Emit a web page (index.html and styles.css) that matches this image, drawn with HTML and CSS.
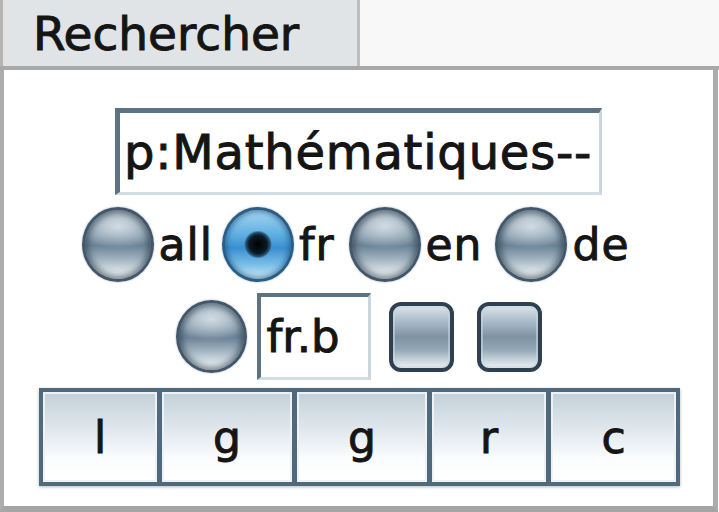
FILE: index.html
```html
<!DOCTYPE html>
<html lang="fr">
<head>
<meta charset="utf-8">
<title>Rechercher</title>
<link rel="stylesheet" href="styles.css">
</head>
<body>
<div class="tabbar">
  <div class="tab">Rechercher</div>
  <div class="tabrest"></div>
</div>
<div class="panel">
  <div class="search">p:Mathématiques--</div>
  <div class="langs">
    <span class="radio"></span><span class="lbl lbl-all">all</span>
    <span class="radio on"></span><span class="lbl lbl-fr">fr</span>
    <span class="radio"></span><span class="lbl lbl-en">en</span>
    <span class="radio"></span><span class="lbl">de</span>
  </div>
  <div class="row2">
    <span class="radio small"></span>
    <div class="mini">fr.b</div>
    <span class="check"></span>
    <span class="check"></span>
  </div>
  <div class="btnbar">
    <div class="btn w1">l</div>
    <div class="btn w2">g</div>
    <div class="btn w2">g</div>
    <div class="btn w1">r</div>
    <div class="btn w3">c</div>
  </div>
</div>
</body>
</html>
```
FILE: styles.css
```css
html, body {
  margin: 0;
  padding: 0;
  background: #ffffff;
}
body {
  width: 719px;
  height: 512px;
  overflow: hidden;
  font-family: "DejaVu Sans", Verdana, sans-serif;
  color: #151515;
  -webkit-text-stroke: 1px #151515;
}
.tabbar {
  display: flex;
  height: 66px;
  border-bottom: 4px solid #a9a9a9;
}
.tab {
  width: 360px;
  box-sizing: border-box;
  background: #e1e4e7;
  border-left: 3px solid #b5b5b5;
  border-right: 3px solid #bdbdbd;
  font-size: 47px;
  line-height: 68px;
  padding-left: 30px;
}
.tabrest {
  flex: 1;
  background: #f8f8f8;
}
.panel {
  width: 718px;
  height: 442px;
  box-sizing: border-box;
  border-left: 4px solid #acacac;
  border-right: 5px solid #acacac;
  border-bottom: 6px solid #a5a5a5;
  display: flex;
  flex-direction: column;
  align-items: center;
  padding-top: 38px;
}
.search {
  width: 487px;
  height: 87px;
  box-sizing: border-box;
  border-top: 5px solid #5d7383;
  border-left: 5px solid #5d7383;
  border-right: 3px solid #c9d6dd;
  border-bottom: 3px solid #d3dee4;
  font-size: 48px;
  letter-spacing: 0.8px;
  line-height: 78px;
  padding-left: 4px;
  white-space: nowrap;
  overflow: hidden;
}
.langs {
  margin-top: 12px;
  height: 75px;
  display: flex;
  align-items: center;
  margin-left: 3px;
}
.lbl {
  font-size: 44px;
  letter-spacing: 1px;
  margin-left: 5px;
  margin-right: 9px;
}
.lbl-fr { margin-right: 14px; }
.lbl-en { margin-right: 13px; }
.radio {
  display: inline-block;
  width: 72px;
  height: 75px;
  box-sizing: border-box;
  border-radius: 50%;
  border: 3px solid #43576a;
  background:
    radial-gradient(ellipse 60% 32% at 50% 24%, rgba(225,233,239,0.8), rgba(225,233,239,0) 100%),
    linear-gradient(#a9b9c4 0%, #8399a9 35%, #6c8497 52%, #a3b5c2 72%, #e6edf1 92%, #f6f8f9 100%);
  box-shadow: inset 0 0 6px 3px rgba(35,55,70,0.6), 0 0 2px rgba(60,80,95,0.5);
}
.radio.on {
  border-color: #2b5e86;
  background:
    radial-gradient(circle at 50% 50%, #000 0, #0b1a26 9px, #24506f 12px, rgba(36,80,111,0) 14px),
    linear-gradient(#a8d6f2 0%, #5fb0e2 35%, #3a8fd0 55%, #7cc0ea 80%, #d2ecfa 100%);
  box-shadow: inset 0 0 5px 2px rgba(20,70,110,0.55), 0 0 2px rgba(40,90,130,0.5);
}
.radio.small {
  width: 71px;
  height: 73px;
}
.row2 {
  margin-top: 11px;
  height: 87px;
  display: flex;
  align-items: center;
}
.mini {
  margin-left: 10px;
  width: 114px;
  height: 87px;
  box-sizing: border-box;
  border-top: 4px solid #5d7383;
  border-left: 4px solid #5d7383;
  border-right: 3px solid #c9d6dd;
  border-bottom: 3px solid #d3dee4;
  font-size: 45px;
  line-height: 80px;
  padding-left: 6px;
}
.check {
  display: inline-block;
  width: 65px;
  height: 70px;
  box-sizing: border-box;
  border-radius: 12px;
  border: 4px solid #2f4150;
  background: linear-gradient(#dbe4ea 0%, #a9bbc7 25%, #7d93a3 50%, #93a7b5 70%, #c9d5dd 88%, #eef2f4 100%);
  box-shadow: inset 0 0 0 2px rgba(200,215,225,0.6);
  margin-left: 18px;
}
.check + .check { margin-left: 23px; }
.btnbar {
  margin-top: 8px;
  margin-left: 2px;
  display: flex;
  background: #4f6a7d;
  padding: 4px;
  gap: 5px;
  box-shadow: 0 1px 3px rgba(60,80,95,0.4);
}
.btn {
  height: 90px;
  box-sizing: border-box;
  border: 2px solid #eef2f5;
  background: linear-gradient(#c3d1da 0%, #e3eaef 45%, #fbfcfd 75%, #ffffff 100%);
  display: flex;
  align-items: center;
  justify-content: center;
  font-size: 44px;
}
.w1 { width: 114px; }
.w2 { width: 130px; }
.w3 { width: 125px; }
```
